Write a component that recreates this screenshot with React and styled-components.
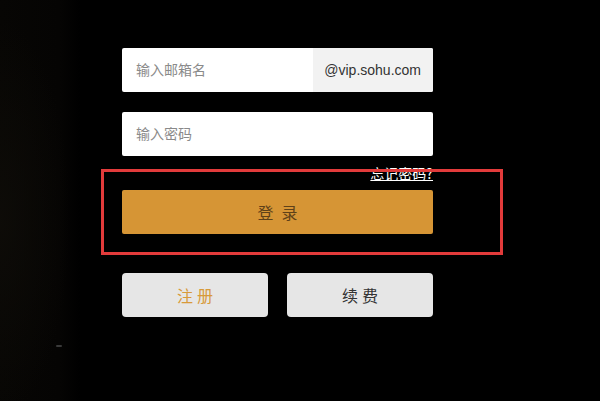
import React from "react";
import styled, { createGlobalStyle } from "styled-components";

const Global = createGlobalStyle`
  html, body { margin: 0; padding: 0; background: #000; }
  body { font-family: "Liberation Sans", "Noto Sans CJK SC", sans-serif; }
  * { box-sizing: border-box; }
`;

const Page = styled.div`
  width: 600px;
  height: 401px;
  overflow: hidden;
  position: relative;
  background:
    radial-gradient(ellipse 70px 200px at 0px 220px, rgba(14, 12, 8, 0.9), rgba(0,0,0,0) 100%),
    linear-gradient(90deg, #070604 0px, #050403 60px, #000 80px);
`;

const Speck = styled.div`
  position: absolute;
  left: 56px;
  top: 345px;
  width: 6px;
  height: 2px;
  background: #3a3a3a;
  border-radius: 1px;
`;

const Form = styled.div`
  display: flex;
  flex-direction: column;
  width: 311px;
  margin-left: 122px;
  padding-top: 48px;
`;

const Field = styled.div`
  display: flex;
  height: 44px;
  background: #fff;
  border-radius: 2px;
  overflow: hidden;
  margin-top: ${(p) => p.$mt || 0}px;
`;

const Input = styled.input`
  flex: 1;
  min-width: 0;
  border: none;
  outline: none;
  background: transparent;
  padding: 0 0 0 14px;
  font-family: "Liberation Sans", "Noto Sans CJK SC", sans-serif;
  font-size: 14px;
  color: #333;
  &::placeholder { color: #8a8a8a; }
`;

const Suffix = styled.div`
  width: 120px;
  background: #f2f2f2;
  color: #333;
  font-size: 14px;
  display: flex;
  align-items: center;
  justify-content: flex-end;
  padding-right: 12px;
`;

const ForgotRow = styled.div`
  display: flex;
  justify-content: flex-end;
  height: 18px;
  margin-top: 8px;
`;

const Forgot = styled.a`
  color: #fff;
  font-size: 14px;
  line-height: 18px;
  text-decoration: underline;
  font-family: "Noto Sans CJK SC", sans-serif;
`;

const LoginWrap = styled.div`
  position: relative;
  margin-top: 8px;
`;

const LoginButton = styled.button`
  width: 100%;
  height: 44px;
  border: none;
  border-radius: 2px;
  background: #d69535;
  color: #5e4119;
  font-family: "Noto Sans CJK SC", sans-serif;
  font-size: 16px;
  letter-spacing: 8px;
  text-indent: 8px;
  cursor: pointer;
`;

const Highlight = styled.div`
  position: absolute;
  left: -21px;
  top: -21px;
  right: -70px;
  bottom: -21px;
  border: 3px solid #e23b3b;
  pointer-events: none;
  z-index: 2;
`;

const ButtonRow = styled.div`
  display: flex;
  gap: 19px;
  margin-top: 39px;
`;

const SecondaryButton = styled.button`
  flex: 1;
  height: 44px;
  border: none;
  border-radius: 4px;
  background: #e6e6e6;
  color: ${(p) => p.$color};
  font-family: "Noto Sans CJK SC", sans-serif;
  font-size: 16px;
  letter-spacing: 4px;
  text-indent: 4px;
  cursor: pointer;
`;

export default function App() {
  return (
    <Page>
      <Global />
      <Speck />
      <Form>
        <Field>
          <Input placeholder="输入邮箱名" />
          <Suffix>@vip.sohu.com</Suffix>
        </Field>
        <Field $mt={20}>
          <Input type="password" placeholder="输入密码" />
        </Field>
        <ForgotRow>
          <Forgot href="#">忘记密码?</Forgot>
        </ForgotRow>
        <LoginWrap>
          <LoginButton>登录</LoginButton>
          <Highlight />
        </LoginWrap>
        <ButtonRow>
          <SecondaryButton $color="#d89a3a">注册</SecondaryButton>
          <SecondaryButton $color="#333">续费</SecondaryButton>
        </ButtonRow>
      </Form>
    </Page>
  );
}
